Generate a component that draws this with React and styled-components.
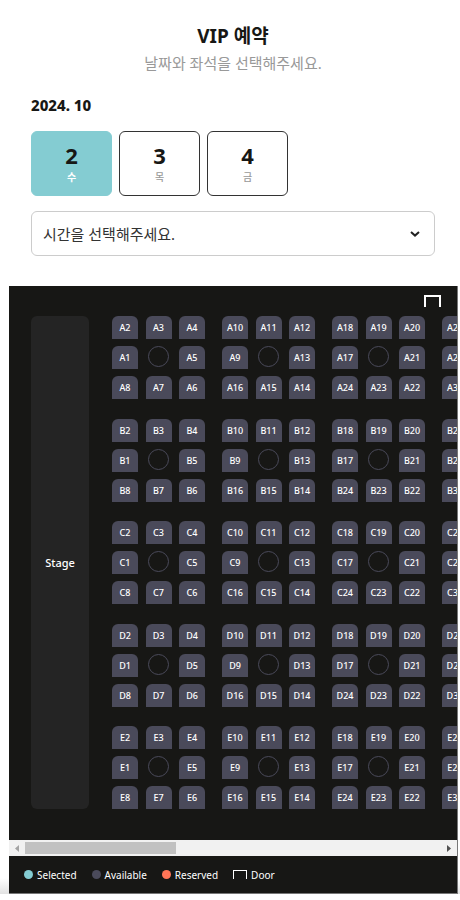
import React, { useEffect, useRef, useState } from "react";
import styled, { createGlobalStyle } from "styled-components";

const GlobalStyle = createGlobalStyle`
  * { box-sizing: border-box; }
  body {
    margin: 0;
    background: #fff;
    color: #171715;
    font-family: "Noto Sans", "Noto Sans CJK KR", sans-serif;
  }
  button, select { font-family: inherit; color: inherit; margin: 0; }
`;

const Page = styled.main`
  padding: 20px 2px 0 9px;
  background: linear-gradient(to top, #e2e2e2, #fff 16px);
`;

const Booking = styled.section`
  padding: 0 23px 0 22px;
`;

const Title = styled.h1`
  margin: 0;
  font-size: 19px;
  line-height: 32px;
  font-weight: 700;
  text-align: center;
`;

const Subtitle = styled.p`
  margin: 0;
  font-size: 15px;
  line-height: 22px;
  color: #999;
  text-align: center;
`;

const Month = styled.h2`
  margin: 20px 0 0;
  font-size: 15px;
  line-height: 22px;
  font-weight: 800;
`;

const Dates = styled.div`
  display: flex;
  gap: 7px;
  margin-top: 15px;
`;

const DateButton = styled.button`
  display: flex;
  flex-direction: column;
  align-items: center;
  width: 81px;
  height: 65px;
  padding: 9px 0 0;
  border: 1px solid ${(p) => (p.$active ? "#84ccd2" : "#333")};
  border-radius: 6px;
  background: ${(p) => (p.$active ? "#84ccd2" : "#fff")};
  cursor: pointer;
`;

const Day = styled.span`
  font-size: 22px;
  line-height: 28px;
  font-weight: 700;
`;

const Weekday = styled.span`
  font-size: 10px;
  line-height: 16px;
  font-weight: ${(p) => (p.$active ? 700 : 500)};
  color: ${(p) => (p.$active ? "#fff" : "#999")};
`;

const SelectBox = styled.div`
  display: grid;
  align-items: center;
  margin-top: 15px;
  > * { grid-area: 1 / 1; }
  > svg { justify-self: end; margin-right: 14px; pointer-events: none; }
`;

const TimeSelect = styled.select`
  appearance: none;
  width: 100%;
  height: 45px;
  padding: 0 40px 0 11px;
  border: 1px solid #ccc;
  border-radius: 6px;
  background: #fff;
  font-size: 15px;
  color: #333;
`;

const SeatPanel = styled.section`
  margin-top: 30px;
  border: solid #777;
  border-width: 0 1px 1px 0;
  background: #171715;
  color: #fff;
`;

const Viewport = styled.div`
  overflow-x: auto;
  scrollbar-width: none;
`;

const Floor = styled.div`
  width: 1232px;
  padding: 9px 22px 31px;
`;

const Doors = styled.div`
  display: flex;
  gap: 320px;
  height: 21px;
  padding-left: 393px;
`;

const Door = styled.span`
  width: ${(p) => (p.$small ? 14 : 17)}px;
  height: ${(p) => (p.$small ? 9 : 12)}px;
  border: solid #fff;
  border-width: ${(p) => (p.$small ? "1px 1px 0" : "2px 2px 0")};
`;

const Hall = styled.div`
  display: flex;
  gap: 23px;
  height: 493px;
`;

const Stage = styled.div`
  display: flex;
  align-items: center;
  justify-content: center;
  width: 58px;
  border-radius: 6px;
  background: #242424;
  font-size: 11px;
  font-weight: 500;
`;

const Sections = styled.div`
  display: flex;
  flex-direction: column;
  justify-content: space-between;
`;

const Section = styled.div`
  display: flex;
  gap: 17px;
`;

const TableGroup = styled.div`
  display: grid;
  grid-template-columns: repeat(3, 26px);
  grid-auto-rows: 23px;
  justify-content: space-between;
  justify-items: center;
  row-gap: 7px;
  width: 93px;
`;

const Seat = styled.button`
  width: 26px;
  height: 23px;
  padding: 0;
  border: 0;
  border-radius: 6px 6px 0 0;
  background: #4a4a5a;
  color: #fff;
  font-size: 9px;
  font-weight: 500;
  line-height: 23px;
  cursor: pointer;
`;

const RoundTable = styled.span`
  width: 21px;
  height: 21px;
  border: 1px solid #4a4a5a;
  border-radius: 50%;
`;

const ScrollBar = styled.div`
  display: flex;
  align-items: center;
  height: 16px;
  background: #f1f1f1;
`;

const ScrollButton = styled.button`
  display: flex;
  align-items: center;
  justify-content: center;
  width: 16px;
  height: 16px;
  padding: 0;
  border: 0;
  background: transparent;
`;

const Track = styled.div`
  flex: 1;
`;

const Thumb = styled.div`
  height: 12px;
  background: #c1c1c1;
`;

const Legend = styled.ul`
  display: flex;
  gap: 15px;
  height: 37px;
  margin: 0;
  padding: 0 15px;
  align-items: center;
  list-style: none;
  font-size: 10px;
  line-height: 16px;
`;

const LegendItem = styled.li`
  display: flex;
  align-items: center;
  gap: 4px;
`;

const Dot = styled.span`
  width: 9px;
  height: 9px;
  border-radius: 50%;
  background: ${(p) => p.$color};
`;

const dates = [
  { day: 2, weekday: "수" },
  { day: 3, weekday: "목" },
  { day: 4, weekday: "금" },
];
const rows = ["A", "B", "C", "D", "E"];
const tables = Array.from({ length: 10 }, (_, i) => i);
const seatOrder = [2, 3, 4, 1, null, 5, 8, 7, 6];

function SeatGroup({ row, index }) {
  return (
    <TableGroup>
      {seatOrder.map((n) =>
        n === null ? (
          <RoundTable key="table" />
        ) : (
          <Seat key={n} type="button">{`${row}${index * 8 + n}`}</Seat>
        )
      )}
    </TableGroup>
  );
}

export default function App() {
  const [selected, setSelected] = useState(2);
  const [bar, setBar] = useState({ size: 36, start: 0 });
  const viewport = useRef(null);

  const measure = () => {
    const el = viewport.current;
    setBar({
      size: (el.clientWidth / el.scrollWidth) * 100,
      start: (el.scrollLeft / el.scrollWidth) * 100,
    });
  };

  useEffect(() => {
    measure();
    window.addEventListener("resize", measure);
    return () => window.removeEventListener("resize", measure);
  }, []);

  const scroll = (left) => viewport.current.scrollBy({ left });

  return (
    <>
      <GlobalStyle />
      <Page>
        <Booking>
          <Title>VIP 예약</Title>
          <Subtitle>날짜와 좌석을 선택해주세요.</Subtitle>
          <Month>2024. 10</Month>
          <Dates>
            {dates.map(({ day, weekday }) => (
              <DateButton
                key={day}
                type="button"
                $active={day === selected}
                aria-pressed={day === selected}
                onClick={() => setSelected(day)}
              >
                <Day>{day}</Day>
                <Weekday $active={day === selected}>{weekday}</Weekday>
              </DateButton>
            ))}
          </Dates>
          <SelectBox>
            <TimeSelect aria-label="시간" defaultValue="">
              <option value="">시간을 선택해주세요.</option>
            </TimeSelect>
            <svg width="12" height="8" viewBox="0 0 12 8" fill="none" stroke="#222" strokeWidth="2">
              <path d="M2 2l4 3.6L10 2" />
            </svg>
          </SelectBox>
        </Booking>
        <SeatPanel>
          <Viewport ref={viewport} onScroll={measure}>
            <Floor>
              <Doors>
                <Door />
                <Door />
              </Doors>
              <Hall>
                <Stage>Stage</Stage>
                <Sections>
                  {rows.map((row) => (
                    <Section key={row}>
                      {tables.map((i) => (
                        <SeatGroup key={i} row={row} index={i} />
                      ))}
                    </Section>
                  ))}
                </Sections>
              </Hall>
            </Floor>
          </Viewport>
          <ScrollBar>
            <ScrollButton type="button" aria-label="Scroll left" onClick={() => scroll(-110)}>
              <svg width="4" height="7" viewBox="0 0 4 7" fill="#a3a3a3"><path d="M4 0v7L0 3.5z" /></svg>
            </ScrollButton>
            <Track>
              <Thumb style={{ width: `${bar.size}%`, marginLeft: `${bar.start}%` }} />
            </Track>
            <ScrollButton type="button" aria-label="Scroll right" onClick={() => scroll(110)}>
              <svg width="4" height="7" viewBox="0 0 4 7" fill="#505050"><path d="M0 0v7l4-3.5z" /></svg>
            </ScrollButton>
          </ScrollBar>
          <Legend>
            <LegendItem><Dot $color="#84ccd2" />Selected</LegendItem>
            <LegendItem><Dot $color="#4a4a5a" />Available</LegendItem>
            <LegendItem><Dot $color="#ff7557" />Reserved</LegendItem>
            <LegendItem><Door $small />Door</LegendItem>
          </Legend>
        </SeatPanel>
      </Page>
    </>
  );
}
